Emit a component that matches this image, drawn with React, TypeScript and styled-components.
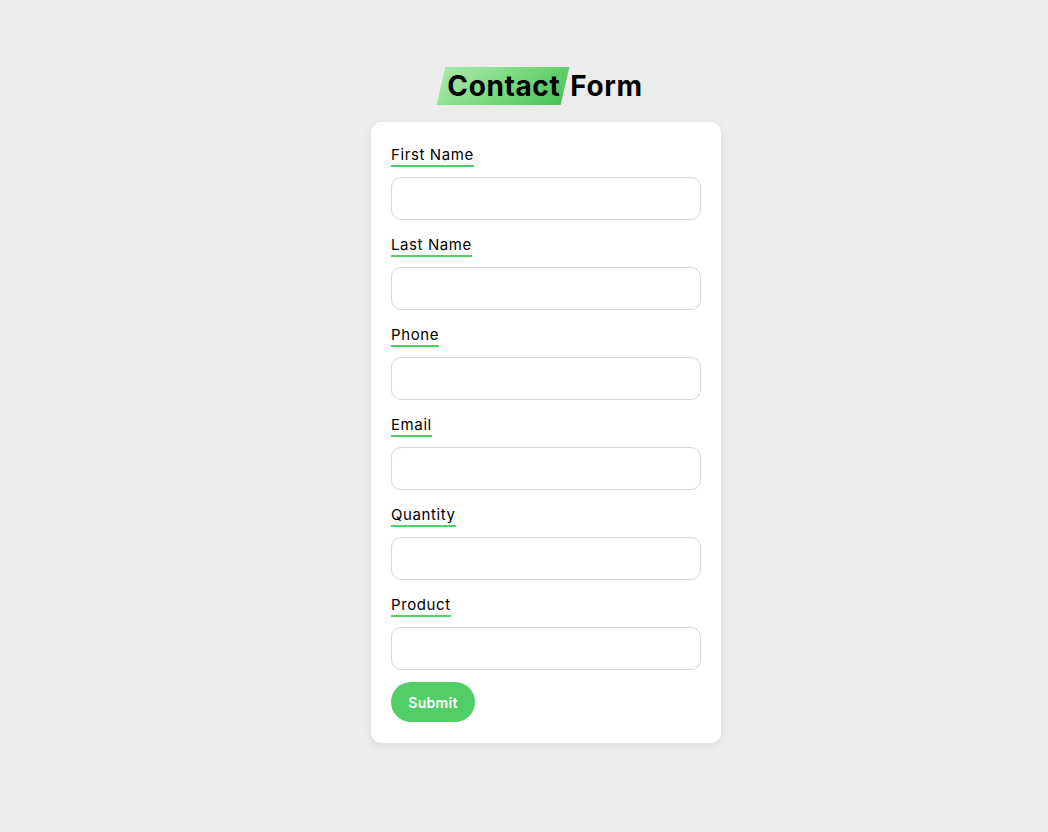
import React from "react";
import styled, { createGlobalStyle } from "styled-components";

const Global = createGlobalStyle`
  html, body { margin: 0; padding: 0; }
  body {
    background: #ececec;
    font-family: Inter, "Noto Sans", sans-serif;
    color: #000;
  }
  * { box-sizing: border-box; }
`;

const Page = styled.div`
  display: flex;
  flex-direction: column;
  align-items: center;
  padding-top: 67px;
  padding-left: 44px;
  min-height: 832px;
`;

const Title = styled.h1`
  margin: 0 0 17px;
  font-size: 28px;
  font-weight: 700;
  line-height: 38px;
  letter-spacing: 0.6px;
  display: flex;
  align-items: center;
  gap: 5px;
  transform: translateX(-4px);
`;

const Highlight = styled.span`
  position: relative;
  padding: 0 5px 0 6px;
  z-index: 0;
  &::before {
    content: "";
    position: absolute;
    inset: 0;
    transform: skewX(-13deg);
    background: linear-gradient(135deg, #a8e9aa 0%, #7bda80 50%, #4bc05a 100%);
    z-index: -1;
  }
`;

const Card = styled.form`
  width: 350px;
  background: #fff;
  border-radius: 10px;
  box-shadow: 0 2px 8px rgba(0, 0, 0, 0.08);
  padding: 23px 20px 21px;
  display: flex;
  flex-direction: column;
`;

const Field = styled.div`
  display: flex;
  flex-direction: column;
  align-items: flex-start;
  margin-bottom: 15px;
`;

const Label = styled.label`
  font-size: 15px;
  line-height: 20px;
  border-bottom: 2px solid #51cf66;
  margin-bottom: 10px;
  letter-spacing: 0.6px;
`;

const Input = styled.input`
  width: 310px;
  height: 43px;
  border: 1px solid #d6d6d6;
  border-radius: 10px;
  outline: none;
  font: inherit;
  padding: 0 12px;
  background: #fff;
`;

const Submit = styled.button`
  width: 84px;
  height: 40px;
  border: none;
  border-radius: 20px;
  background: #51cf66;
  color: #fff;
  font-family: inherit;
  font-size: 14px;
  font-weight: 600;
  letter-spacing: 0.3px;
  margin-top: -3px;
  cursor: pointer;
`;

const fields = ["First Name", "Last Name", "Phone", "Email", "Quantity", "Product"];

export default function App() {
  return (
    <>
      <Global />
      <Page>
        <Title>
          <Highlight>Contact</Highlight>
          <span>Form</span>
        </Title>
        <Card onSubmit={(e) => e.preventDefault()}>
          {fields.map((f) => (
            <Field key={f}>
              <Label>{f}</Label>
              <Input type="text" />
            </Field>
          ))}
          <Submit type="submit">Submit</Submit>
        </Card>
      </Page>
    </>
  );
}
